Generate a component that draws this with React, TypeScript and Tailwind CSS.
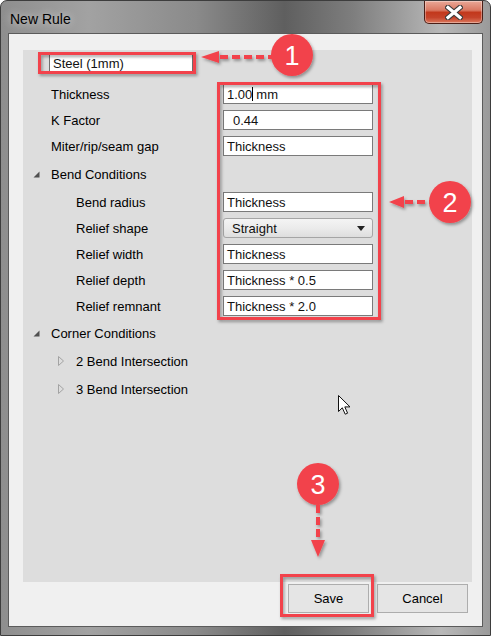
import React from 'react';

function Field({ children, inset = false }: { children: React.ReactNode; inset?: boolean }) {
  return (
    <div
      className={`flex h-[20px] w-[150px] items-center border border-[#7a7a7a] bg-white text-[13px] leading-none text-[#111] ${
        inset ? 'pl-[9px]' : 'pl-[3px]'
      }`}
    >
      {children}
    </div>
  );
}

function ReliefSelect() {
  return (
    <div className="flex h-[20px] w-[150px] items-center justify-between rounded-[3px] border border-[#a5a5a5] bg-[linear-gradient(180deg,#f4f4f4_0%,#ebebeb_50%,#dedede_100%)] pl-[8px] pr-[7px] text-[13px] leading-none text-[#111]">
      <span>Straight</span>
      <svg width="8" height="5" viewBox="0 0 8 5">
        <path d="M0 0 L8 0 L4 5 Z" fill="#222" />
      </svg>
    </div>
  );
}

function ExpandedGlyph() {
  return (
    <svg width="7" height="7" viewBox="0 0 7 7">
      <path d="M6.5 0.5 L6.5 6.5 L0.5 6.5 Z" fill="#505050" />
    </svg>
  );
}

function CollapsedGlyph() {
  return (
    <svg width="6" height="10" viewBox="0 0 6 10">
      <path d="M0.5 0.5 L5.5 5 L0.5 9.5 Z" fill="none" stroke="#a3a3a3" />
    </svg>
  );
}

function PropRow({ label, sub = false, children }: { label: string; sub?: boolean; children: React.ReactNode }) {
  return (
    <div className="flex h-[26px] items-center">
      <div className={`w-[200px] shrink-0 ${sub ? 'pl-[53px]' : 'pl-[28px]'}`}>{label}</div>
      {children}
    </div>
  );
}

function GroupRow({ label, open, sub = false, tall = false }: { label: string; open: boolean; sub?: boolean; tall?: boolean }) {
  return (
    <div className={`flex items-center ${tall ? 'h-[30px]' : 'h-[28px]'} ${sub ? 'pl-[35px]' : 'pl-[10px]'}`}>
      <div className="flex w-[18px] items-center">{open ? <ExpandedGlyph /> : <CollapsedGlyph />}</div>
      <span>{label}</span>
    </div>
  );
}

// callout markers drawn on top of the dialog
function Callouts() {
  const red = '#f2434b';
  return (
    <svg className="pointer-events-none absolute left-0 top-0" width="491" height="636" viewBox="0 0 491 636">
      <defs>
        <filter id="drop" x="-20%" y="-20%" width="140%" height="140%">
          <feDropShadow dx="1.5" dy="2" stdDeviation="1.6" floodColor="#000" floodOpacity="0.35" />
        </filter>
      </defs>
      <g filter="url(#drop)" fill="none" stroke={red} strokeWidth="3">
        <rect x="39.5" y="53.5" width="155" height="19" />
        <rect x="218.5" y="83.5" width="161" height="235" />
        <rect x="281.5" y="575.5" width="91" height="40" />
      </g>
      <g filter="url(#drop)">
        <line x1="220" y1="57" x2="272" y2="57" stroke={red} strokeWidth="4" strokeDasharray="8 4" />
        <path d="M201 57 L219 51 L219 63 Z" fill={red} />
        <line x1="405" y1="202" x2="432" y2="202" stroke={red} strokeWidth="4" strokeDasharray="8 4" />
        <path d="M389 202 L404 196 L404 208 Z" fill={red} />
        <line x1="318" y1="505" x2="318" y2="540" stroke={red} strokeWidth="4" strokeDasharray="8 4" />
        <path d="M318 557 L311 540 L325 540 Z" fill={red} />
        <circle cx="292" cy="55" r="21" fill={red} />
        <circle cx="450" cy="202" r="21" fill={red} />
        <circle cx="318" cy="484" r="21" fill={red} />
      </g>
      <g fill="#fff" fontFamily="'Liberation Sans', Arial, sans-serif" fontSize="27" textAnchor="middle">
        <text x="292" y="65">1</text>
        <text x="450" y="212">2</text>
        <text x="318" y="494">3</text>
      </g>
      {/* mouse pointer */}
      <path
        d="M338.5 395.5 L338.5 411.5 L342.3 407.8 L345.2 414.2 L347.6 413.2 L344.8 406.9 L350 406.9 Z"
        fill="#fff"
        stroke="#111"
        strokeWidth="1"
        strokeLinejoin="miter"
      />
    </svg>
  );
}

export default function App() {
  return (
    <div className="relative h-[636px] w-[491px] font-['Liberation_Sans',Arial,sans-serif]">
      <div className="flex h-full w-full flex-col rounded-t-[7px] border border-[#3d3d3d] bg-[linear-gradient(90deg,#8e8e8e_0%,#a2a2a2_18%,#8a8a8a_40%,#5f5f5f_58%,#7e7e7e_72%,#b8b8b8_90%,#9a9a9a_100%)]">
        {/* title bar */}
        <div className="flex h-[32px] shrink-0 items-start justify-between">
          <div className="pl-[9px] pt-[10px] text-[14px] leading-[16px] text-black [text-shadow:0_0_8px_rgba(255,255,255,0.75)]">
            New Rule
          </div>
          <div className="mr-[7px] flex h-[23px] w-[59px] items-center justify-center rounded-b-[5px] border border-t-0 border-[#4a1e16] bg-[linear-gradient(180deg,#e9a897_0%,#d97862_42%,#c2381c_52%,#c5432a_75%,#dc7a5e_100%)] shadow-[inset_0_0_0_1px_rgba(255,255,255,0.35)]">
            <svg width="18" height="15" viewBox="0 0 18 15">
              <path d="M3 2.5 L15 12.5 M15 2.5 L3 12.5" stroke="#3a3a3a" strokeWidth="5.5" strokeLinecap="square" />
              <path d="M3 2.5 L15 12.5 M15 2.5 L3 12.5" stroke="#fff" strokeWidth="3.2" strokeLinecap="square" />
            </svg>
          </div>
        </div>

        {/* client area */}
        <div className="mx-[7px] mb-[8px] flex flex-1 flex-col border border-[#5b5b5b] bg-[#f0f0f0] text-[13px] leading-none text-black">
          <div className="ml-[14px] mr-[10px] mt-[16px] flex h-[532px] flex-col bg-[#dddddd] pt-[4px]">
            <div className="pl-[26px]">
              <div className="flex h-[19px] w-[144px] items-center border border-[#6f6f6f] bg-white pl-[3px] text-[#111]">
                Steel (1mm)
              </div>
            </div>

            <div className="mt-[8px] flex flex-col">
              <PropRow label="Thickness">
                <Field>
                  <span>1.00</span>
                  <span className="h-[14px] w-px bg-black" />
                  <span className="pl-[3px]">mm</span>
                </Field>
              </PropRow>
              <PropRow label="K Factor">
                <Field inset>0.44</Field>
              </PropRow>
              <PropRow label="Miter/rip/seam gap">
                <Field>Thickness</Field>
              </PropRow>

              <GroupRow label="Bend Conditions" open tall />
              <PropRow label="Bend radius" sub>
                <Field>Thickness</Field>
              </PropRow>
              <PropRow label="Relief shape" sub>
                <ReliefSelect />
              </PropRow>
              <PropRow label="Relief width" sub>
                <Field>Thickness</Field>
              </PropRow>
              <PropRow label="Relief depth" sub>
                <Field>Thickness * 0.5</Field>
              </PropRow>
              <PropRow label="Relief remnant" sub>
                <Field>Thickness * 2.0</Field>
              </PropRow>

              <GroupRow label="Corner Conditions" open />
              <GroupRow label="2 Bend Intersection" open={false} sub />
              <GroupRow label="3 Bend Intersection" open={false} sub />
            </div>
          </div>

          <div className="mt-[2px] flex justify-end gap-[8px] pr-[14px]">
            <button className="flex h-[29px] w-[81px] items-center justify-center border border-[#adadad] bg-[#e5e5e5] text-[13px] text-black">
              Save
            </button>
            <button className="flex h-[29px] w-[91px] items-center justify-center border border-[#adadad] bg-[#e5e5e5] text-[13px] text-black">
              Cancel
            </button>
          </div>
        </div>
      </div>
      <Callouts />
    </div>
  );
}
